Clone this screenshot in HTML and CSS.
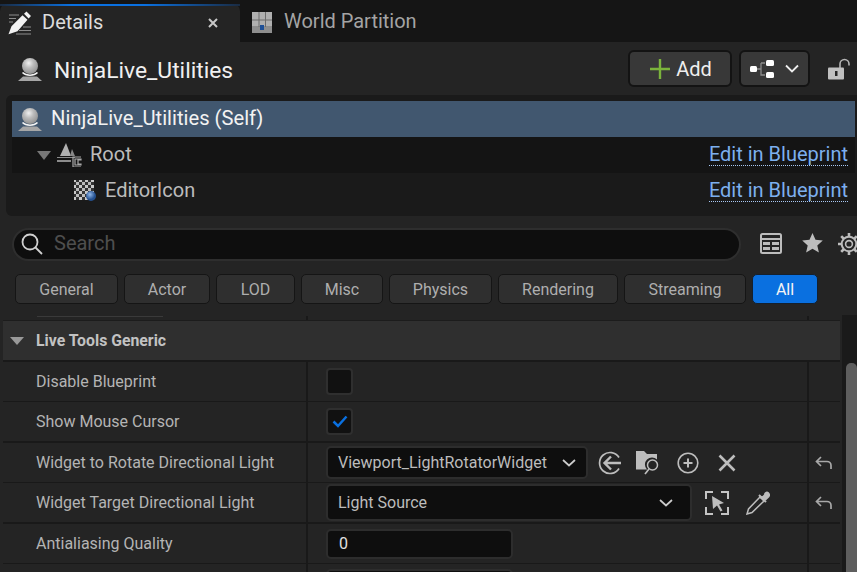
FILE: index.html
```html
<!DOCTYPE html>
<html lang="en">
<head>
<meta charset="utf-8">
<title>Details</title>
<link rel="stylesheet" href="styles.css">
</head>
<body>
<div class="panel">
  <div class="tabbar">
    <div class="tab active">
      <svg class="tab-icon" width="24" height="24" viewBox="0 0 24 24"><path d="M1 4h10M1 7.500h7M1 11h4M15 16h8M11 19.500h12M8 23h15" stroke="#8c8c8c" stroke-width="1.200" fill="none"/><path d="M1 24l3-8L15 5l5 4.500L10 21zM16.500 3.500l2.500-2.300 4.500 4.500-2.400 2.500z" fill="#f2f2f2" transform="translate(-.5 -.8)"/></svg>
      <span class="tab-title">Details</span>
      <svg class="tab-close" width="10" height="10" viewBox="0 0 10 10"><path d="M1 1l8 8M9 1l-8 8" stroke="#c8c8c8" stroke-width="2"/></svg>
    </div>
    <div class="tab inactive">
      <svg width="20" height="21" viewBox="0 0 20 21"><rect width="20" height="21" fill="#b0b0b0"/><path d="M7 0v15M13.500 0v15M0 8h20M0 15h20" stroke="#6c6c6c" stroke-width="1"/><rect x="0" y="16" width="20" height="5" fill="#8f8f8f"/><rect x="8" y="13" width="4" height="5" fill="#1e4f96"/></svg>
      <span class="tab-title dim">World Partition</span>
    </div>
  </div>

  <div class="actor-bar">
    <svg class="actor-icon" width="24" height="24" viewBox="0 0 24 24"><use href="#actor"/></svg>
    <span class="actor-name">NinjaLive_Utilities</span>
    <button class="btn add"><svg width="20" height="20" viewBox="0 0 20 20"><path d="M10 0v20M0 10h20" stroke="#7bb33c" stroke-width="2.400"/></svg><span>Add</span></button>
    <button class="btn graph">
      <svg width="24" height="18" viewBox="0 0 24 18"><path d="M6 9h5M11 3v12h4M11 3h4" stroke="#8d8d8d" stroke-width="1.300" fill="none"/><rect x="0" y="6" width="7" height="6" rx="1.500" fill="#fff"/><rect x="16" y="0" width="8" height="6" rx="1.500" fill="#fff"/><rect x="16" y="12" width="8" height="6" rx="1.500" fill="#fff"/></svg>
      <svg width="14" height="9" viewBox="0 0 14 9"><path d="M1 1.500l6 6 6-6" stroke="#eee" stroke-width="1.800" fill="none"/></svg>
    </button>
    <svg class="lock" width="22" height="22" viewBox="0 0 22 22"><path d="M12 10V6a4.500 4.500 0 0 1 9 0v1.500" stroke="#b5b5b5" stroke-width="1.600" fill="none"/><rect x="0" y="9.500" width="16" height="12" rx="1" fill="#c0c0c0"/><rect x="7" y="13" width="2.500" height="5" fill="#242424"/></svg>
  </div>

  <div class="tree">
    <div class="tree-row selected">
      <svg width="24" height="24" viewBox="0 0 24 24"><use href="#actor"/></svg>
      <span class="self-name">NinjaLive_Utilities (Self)</span>
    </div>
    <div class="tree-row root">
      <svg class="caret" width="14" height="9" viewBox="0 0 14 9"><path d="M0 0h14L7 9z" fill="#777"/></svg>
      <svg class="root-icon" width="25" height="24" viewBox="0 0 25 24"><path d="M9 0l5 13H3z" fill="#b0b0b0"/><path d="M15 6l3 7h-5z" fill="#888"/><path d="M0 14h18v1H0zM0 17h14v2H0z" fill="#8c8c8c"/><path d="M24 14h-8v10h8M18 16h6v1h-3v4h3v1h-6z" fill="none" stroke="#a8a8a8" stroke-width="1.200"/></svg>
      <span class="tree-label">Root</span>
      <a class="bp-link">Edit in Blueprint</a>
    </div>
    <div class="tree-row child">
      <svg class="checker" width="24" height="24" viewBox="0 0 24 24"><defs><pattern id="chk" width="6" height="6" patternUnits="userSpaceOnUse"><rect width="6" height="6" fill="#333"/><rect width="3" height="3" fill="#c8c8c8"/><rect x="3" y="3" width="3" height="3" fill="#bbb"/></pattern><radialGradient id="ball" cx=".4" cy=".35"><stop offset="0" stop-color="#8fb6e8"/><stop offset="1" stop-color="#24508f"/></radialGradient></defs><rect x="1" y="1" width="20" height="20" fill="url(#chk)"/><circle cx="18" cy="17" r="5" fill="url(#ball)"/></svg>
      <span class="tree-label">EditorIcon</span>
      <a class="bp-link">Edit in Blueprint</a>
    </div>
  </div>

  <div class="search-row">
    <div class="search">
      <svg width="24" height="24" viewBox="0 0 24 24"><circle cx="10" cy="10" r="7.500" fill="none" stroke="#d0d0d0" stroke-width="1.800"/><path d="M15.500 15.500l6.500 6.500" stroke="#d0d0d0" stroke-width="1.800"/></svg>
      <span class="placeholder">Search</span>
    </div>
    <svg class="s-icon" width="22" height="21" viewBox="0 0 22 21"><rect x="1" y="1" width="20" height="19" rx="1.500" fill="none" stroke="#bdbdbd" stroke-width="2"/><path d="M1 5h20V7H1z" fill="#bdbdbd"/><path d="M3 9h7v3H3zM12 9h7v3h-7zM3 14h7v3H3zM12 14h7v3h-7z" fill="#bdbdbd"/><path d="M1 6h20" stroke="#bdbdbd" stroke-width="2"/><path d="M3 13h16" stroke="#242424" stroke-width="1"/></svg>
    <svg class="s-icon star" width="21" height="20" viewBox="0 0 21 20"><path d="M10.500 0l3 6.800 7.300.7-5.500 4.900 1.600 7.200-6.400-3.800-6.400 3.800 1.600-7.200L.2 7.500l7.300-.7z" fill="#bdbdbd"/></svg>
    <svg class="s-icon gear" width="22" height="22" viewBox="0 0 22 22"><circle cx="11" cy="11" r="7.300" fill="none" stroke="#bdbdbd" stroke-width="2"/><circle cx="11" cy="11" r="3.400" fill="none" stroke="#bdbdbd" stroke-width="1.600"/><path d="M11 0v4M11 18v4M0 11h4M18 11h4M3.200 3.200l2.800 2.800M16 16l2.800 2.800M18.800 3.200L16 6M6 16l-2.800 2.800" stroke="#bdbdbd" stroke-width="2.600"/></svg>
  </div>

  <div class="chips">
    <span class="chip c-general">General</span>
    <span class="chip c-actor">Actor</span>
    <span class="chip c-lod">LOD</span>
    <span class="chip c-misc">Misc</span>
    <span class="chip c-physics">Physics</span>
    <span class="chip c-rendering">Rendering</span>
    <span class="chip c-streaming">Streaming</span>
    <span class="chip c-all on">All</span>
  </div>

  <div class="details">
    <div class="props">
      <div class="row stub"><div class="name-cell"><i class="stub-line"></i></div><div class="val-cell"></div><div class="reset-cell"></div></div>
      <div class="section">
        <svg width="14" height="8" viewBox="0 0 14 8"><path d="M0 0h14L7 8z" fill="#999"/></svg>
        <span>Live Tools Generic</span>
      </div>
      <div class="row"><div class="name-cell">Disable Blueprint</div><div class="val-cell"><span class="check"></span></div><div class="reset-cell"></div></div>
      <div class="row thick"><div class="name-cell">Show Mouse Cursor</div><div class="val-cell"><span class="check"><svg width="16" height="13" viewBox="0 0 16 13"><path d="M1.500 6.500l4.500 4.500 8.500-9.500" stroke="#0a70e0" stroke-width="2.500" fill="none"/></svg></span></div><div class="reset-cell"></div></div>
      <div class="row">
        <div class="name-cell">Widget to Rotate Directional Light</div>
        <div class="val-cell">
          <span class="combo c-widget"><span>Viewport_LightRotatorWidget</span><svg width="14" height="8" viewBox="0 0 14 8"><path d="M1 1l6 5.500L13 1" stroke="#ccc" stroke-width="1.700" fill="none"/></svg></span>
          <span class="actions">
            <svg width="24" height="24" viewBox="0 0 24 24"><path d="M21 6.500A10.500 10.500 0 1 0 21 17.500" fill="none" stroke="#bdbdbd" stroke-width="1.700"/><path d="M23 12H7M13 5.500L6.500 12l6.500 6.500" fill="none" stroke="#bdbdbd" stroke-width="2.400"/></svg>
            <svg width="24" height="24" viewBox="0 0 24 24"><path d="M0 0h8l3 3h10v5.500A7 7 0 0 0 11 18.500H0z" fill="#bdbdbd"/><circle cx="16.500" cy="14" r="5" fill="none" stroke="#bdbdbd" stroke-width="1.500"/><path d="M13 18l-4 5" stroke="#bdbdbd" stroke-width="1.700"/></svg>
            <svg class="act-plus" width="22" height="22" viewBox="0 0 22 22"><circle cx="11" cy="11" r="9.800" fill="none" stroke="#bdbdbd" stroke-width="1.600"/><path d="M11 6.500v9M6.500 11h9" stroke="#bdbdbd" stroke-width="2"/></svg>
            <svg class="act-x" width="18" height="18" viewBox="0 0 18 18"><path d="M1.500 1.500l15 15M16.500 1.500l-15 15" stroke="#bdbdbd" stroke-width="2.600"/></svg>
          </span>
        </div>
        <div class="reset-cell"><svg width="18" height="14" viewBox="0 0 18 14"><path d="M6 1L1.500 5.500 6 10M2 5.500h10a4 4 0 0 1 4 4V13" fill="none" stroke="#a8a8a8" stroke-width="1.700"/></svg></div>
      </div>
      <div class="row thick">
        <div class="name-cell">Widget Target Directional Light</div>
        <div class="val-cell">
          <span class="combo c-target"><span>Light Source</span><svg width="14" height="8" viewBox="0 0 14 8"><path d="M1 1l6 5.500L13 1" stroke="#ccc" stroke-width="1.700" fill="none"/></svg></span>
          <span class="actions wide">
            <svg width="24" height="24" viewBox="0 0 24 24"><path d="M1 8V1h7M16 1h7v7M23 16v7h-7M8 23H1v-7" fill="none" stroke="#c4c4c4" stroke-width="2"/><path d="M7 5l12 7-5 1.500 3.500 6-2 1-3.500-6L8 18z" fill="#bdbdbd"/></svg>
            <svg width="24" height="24" viewBox="0 0 24 24"><path d="M14 6L2.500 18 1 23l5-1.500L18 10z" fill="none" stroke="#bdbdbd" stroke-width="1.500"/><path d="M13 4l7 7M16 7l3-3a2.500 2.500 0 0 1 2-2.500 2.500 2.500 0 0 1 1.500 4L20 8z" fill="#bdbdbd" stroke="#bdbdbd" stroke-width="2"/></svg>
          </span>
        </div>
        <div class="reset-cell"><svg width="18" height="14" viewBox="0 0 18 14"><path d="M6 1L1.500 5.500 6 10M2 5.500h10a4 4 0 0 1 4 4V13" fill="none" stroke="#a8a8a8" stroke-width="1.700"/></svg></div>
      </div>
      <div class="row">
        <div class="name-cell">Antialiasing Quality</div>
        <div class="val-cell"><span class="num">0</span></div>
        <div class="reset-cell"></div>
      </div>
      <div class="row last">
        <div class="name-cell"></div>
        <div class="val-cell"><span class="num"></span></div>
        <div class="reset-cell"></div>
      </div>
    </div>
    <div class="scrollbar"><div class="thumb"></div></div>
  </div>
</div>

<svg class="defs" width="0" height="0">
  <defs>
    <radialGradient id="orb" cx=".42" cy=".32" r=".75"><stop offset="0" stop-color="#f0f0f0"/><stop offset=".4" stop-color="#bcbcbc"/><stop offset="1" stop-color="#8a8a8a"/></radialGradient>
    <g id="actor"><circle cx="12" cy="9" r="8" fill="url(#orb)"/><path d="M4.500 15.500a9 6 0 0 0 15 0" fill="none" stroke="#f4f4f4" stroke-width="1.600"/><path d="M5 19.500h14l5 4.500H0z" fill="#a6a6a6"/></g>
  </defs>
</svg>
</body>
</html>
```
FILE: styles.css
```css
* { box-sizing: border-box; }
html, body { margin: 0; height: 572px; overflow: hidden; background: #242424; }
body { font-family: Roboto, "Liberation Sans", sans-serif; color: #c0c0c0; }
.defs { position: absolute; }
svg { display: block; flex: none; }
.panel { width: 857px; height: 572px; display: flex; flex-direction: column; overflow: hidden; }

.tabbar { height: 42px; background: #151515; display: flex; flex: none; padding-top: 4px; }
.tab { display: flex; align-items: center; height: 38px; }
.tab.active { width: 240px; background: #242424; border-radius: 7px 7px 0 0; padding: 0 0 2px 8px; border-top: 2px solid transparent; border-image: linear-gradient(90deg, #1a2a40, #0a70e0 30%, #0a70e0 60%, #1a2a40) 1; }
.tab-icon { margin-right: 10px; }
.tab-title { font-size: 20px; color: #dcdcdc; padding-bottom: 3px; }
.tab-title.dim { color: #a4a4a4; padding-bottom: 2px; }
.tab-close { margin-left: 105px; }
.tab.inactive { padding-left: 12px; gap: 12px; padding-bottom: 2px; }

.actor-bar { height: 53px; flex: none; display: flex; align-items: center; padding: 0 7px 0 18px; background: #242424; }
.actor-name { font-size: 22.800px; color: #f0f0f0; margin-left: 12px; flex: 1; padding-top: 4px; }
.btn { height: 37px; background: #383838; border: 2px solid #131313; border-radius: 6px; padding: 0; display: flex; align-items: center; font-family: inherit; color: #eee; }
.add { width: 104px; justify-content: center; gap: 6px; font-size: 20px; margin-right: 7px; padding-left: 2px; }
.graph { width: 71px; padding-left: 9px; gap: 11px; }
.lock { margin: 0 0 0 18px; }

.tree { height: 121px; flex: none; margin-left: 6px; padding: 6px 2px 7px 6px; background: #1a1a1a; border-radius: 6px 0 0 6px; }
.tree-row { height: 36px; display: flex; align-items: center; font-size: 20px; }
.selected { background: #41576f; color: #f2f2f2; padding-left: 6px; }
.self-name { margin-left: 9px; font-size: 20.200px; padding-bottom: 2px; }
.root { background: #141414; padding: 0 7px 0 25px; }
.root-icon { margin-left: 6px; }
.tree-label { color: #bcbcbc; margin-left: 8px; flex: 1; padding-bottom: 2px; }
.child { padding: 0 7px 0 60px; }
.checker { margin-left: 1px; }
.child .tree-label { margin-left: 8px; }
.bp-link { color: #7dafee; border-bottom: 1px dotted #a8c8f4; line-height: 21px; }

.search-row { height: 58px; flex: none; display: flex; align-items: flex-start; padding: 12px 0 0 12px; }
.search { width: 729px; height: 33px; flex: none; background: #0e0e0e; border: 2px solid #2e2e2e; border-radius: 17px; display: flex; align-items: center; padding: 0 0 1px 6px; gap: 10px; }
.placeholder { font-size: 20px; color: #4e4e4e; padding-bottom: 3px; }
.s-icon { margin: 5px 0 0 19px; }
.s-icon.star { margin-left: 20px; }
.s-icon.gear { margin-left: 15px; }

.chips { height: 30px; flex: none; display: flex; gap: 6px; padding-left: 15px; align-items: stretch; }
.chip { background: #2f2f2f; border: 1px solid #151515; border-radius: 5px; font-size: 16px; color: #aeaeae; display: flex; align-items: center; justify-content: center; }
.chip.on { background: #0a70e0; color: #f4f4f4; border-color: #14202e; }
.c-general { width: 103px; }
.c-actor { width: 86px; }
.c-lod { width: 79px; }
.c-misc { width: 82px; }
.c-physics { width: 103px; }
.c-rendering { width: 120px; }
.c-streaming { width: 122px; }
.c-all { width: 66px; }

.details { flex: 1; min-height: 0; display: flex; padding: 12px 0 0 3px; overflow: hidden; }
.props { width: 837px; flex: none; }
.row { display: grid; grid-template-columns: 305px 501px 31px; height: 40px; font-size: 16px; color: #b4b4b4; border-bottom: 1px solid #191919; }
.row.thick { height: 41px; border-bottom-width: 2px; }
.row.stub { height: 4px; border-bottom: 0; }
.stub-line { display: block; width: 126px; height: 1px; margin-left: 1px; background: #3a3a3a; }
.name-cell { padding-left: 33px; display: flex; align-items: center; border-right: 2px solid #191919; }
.stub .name-cell { align-items: flex-start; }
.val-cell { display: flex; align-items: center; padding-left: 18px; border-right: 2px solid #191919; }
.reset-cell { display: flex; align-items: center; padding-left: 6px; }
.section { height: 42px; background: #2f2f2f; border-top: 1px solid #1c1c1c; border-bottom: 2px solid #191919; display: flex; align-items: center; padding-left: 7px; gap: 12px; font-size: 15.800px; font-weight: 700; color: #c2c2c2; }
.check { width: 27px; height: 27px; background: #111; border: 2px solid #2f2f2f; border-radius: 4px; display: flex; align-items: center; justify-content: center; }
.combo { height: 33px; background: #0e0e0e; border: 2px solid #2d2d2d; border-radius: 5px; display: flex; align-items: center; justify-content: space-between; padding: 0 10px; color: #bcbcbc; flex: none; }
.c-widget { width: 262px; }
.c-target { width: 366px; height: 37px; padding-right: 17px; }
.actions { display: flex; align-items: center; gap: 14px; margin-left: 10px; }
.act-plus { margin-left: 3px; }
.act-x { margin-left: 5px; }
.actions.wide { margin-left: 13px; gap: 17px; }
.num { width: 187px; height: 30px; background: #0e0e0e; border: 2px solid #2d2d2d; border-radius: 5px; display: flex; align-items: center; padding-left: 11px; color: #e0e0e0; }
.scrollbar { width: 15px; flex: none; background: #1a1a1a; margin: -1px 0 0 2px; padding: 48px 0 0 4px; }
.thumb { height: 300px; background: #5e5e5e; border-radius: 5px 5px 0 0; }
```
